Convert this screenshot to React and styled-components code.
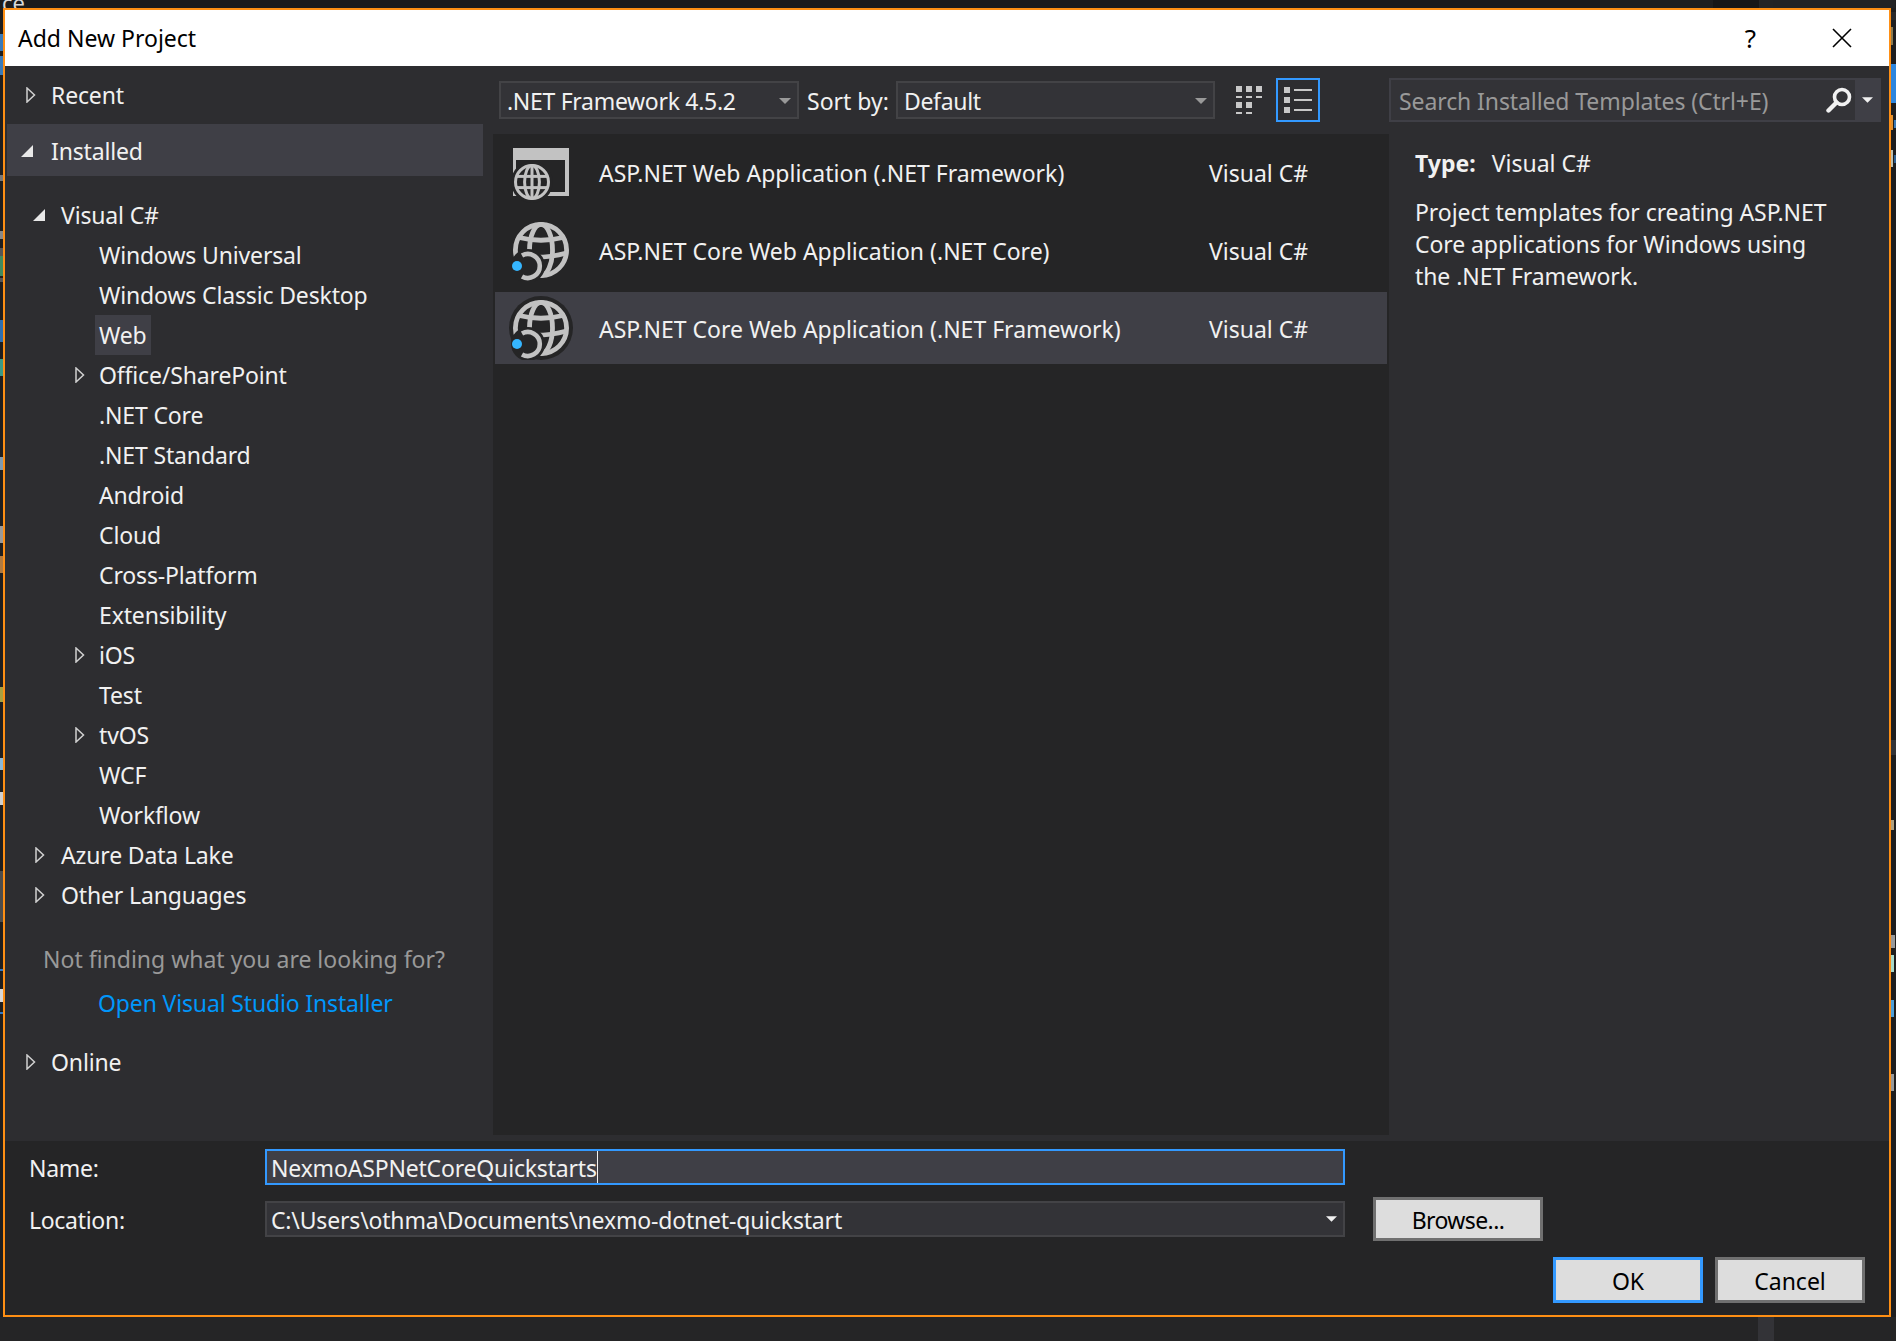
import React from 'react';
import styled, { createGlobalStyle } from 'styled-components';

const GlobalStyle = createGlobalStyle`
  html, body {
    margin: 0;
    padding: 0;
    background: #1e1e1f;
  }
  * {
    box-sizing: border-box;
  }
`;

const Stage = styled.div`
  position: relative;
  width: 1896px;
  height: 1341px;
  overflow: hidden;
  padding: 8px 0 0 3px;
  background: linear-gradient(#1b1b1c 0, #1b1b1c 8px, #1e1e1f 8px, #1e1e1f 1317px, #252526 1317px);
  font-family: 'Noto Sans', 'Open Sans', sans-serif;
  font-size: 23px;
  color: #f1f1f1;
`;

// editor behind the dialog, only slivers of it stick out
const Sliver = styled.div`
  position: absolute;
  left: ${({ $x }) => $x}px;
  top: ${({ $y }) => $y}px;
  width: ${({ $w }) => $w}px;
  height: ${({ $h }) => $h}px;
  background: ${({ $c }) => $c};
`;

const CodeScrap = styled.span`
  position: absolute;
  left: 2px;
  top: -13px;
  font-size: 22px;
  color: #d8d8d8;
`;

const Dialog = styled.div`
  position: relative;
  width: 1888px;
  height: 1309px;
  border: 2px solid #fe8f14;
  background: #2d2d30;
  display: flex;
  flex-direction: column;
`;

const TitleBar = styled.div`
  height: 56px;
  flex-shrink: 0;
  background: #fff;
  color: #000;
  display: flex;
  align-items: center;
  padding: 0 37px 0 13px;
`;

const Title = styled.div`
  flex: 1;
`;

const HelpMark = styled.span`
  font-size: 26px;
  margin-right: 76px;
`;

const Body = styled.div`
  flex: 1;
  display: flex;
  min-height: 0;
`;

const Sidebar = styled.div`
  width: 488px;
  flex-shrink: 0;
  padding: 2px 10px 0 2px;
  letter-spacing: -0.15px;
`;

const TopRow = styled.div`
  height: 52px;
  display: flex;
  align-items: center;
  padding: 2px 0 0 ${({ $open }) => ($open ? 13 : 19)}px;
  margin-bottom: 4px;
  background: ${({ $active }) => ($active ? '#3f3f46' : 'transparent')};
`;

const TreeList = styled.div`
  margin-top: 19px;
`;

const TreeRow = styled.div`
  height: 40px;
  display: flex;
  align-items: center;
  padding-left: ${({ $indent }) => $indent}px;
`;

const ArrowSlot = styled.span`
  width: ${({ $w }) => $w}px;
  flex-shrink: 0;
  display: flex;
  align-items: center;
`;

const RowLabel = styled.span`
  height: 40px;
  line-height: 40px;
  padding: 0 4px;
  margin-left: -4px;
  background: ${({ $selected }) => ($selected ? '#3f3f46' : 'transparent')};
`;

const Hint = styled.div`
  height: 40px;
  line-height: 40px;
  padding-left: 36px;
  margin-top: 24px;
  color: #999;
  letter-spacing: 0;
`;

const InstallerLink = styled.div`
  height: 40px;
  line-height: 40px;
  padding-left: 91px;
  margin-top: 4px;
  color: #0097fb;
`;

const OnlineRow = styled(TopRow)`
  margin-top: 12px;
`;

const Center = styled.div`
  width: 896px;
  flex-shrink: 0;
  padding: 12px 0 6px;
  display: flex;
  flex-direction: column;
`;

const Toolbar = styled.div`
  height: 44px;
  display: flex;
  align-items: center;
  padding-left: 6px;
`;

const Combo = styled.div`
  width: ${({ $w }) => $w}px;
  height: 38px;
  border: 2px solid #434346;
  background: #333337;
  display: flex;
  align-items: center;
  justify-content: space-between;
  padding: 2px 6px 0 6px;
  letter-spacing: -0.3px;
`;

const SortLabel = styled.span`
  margin: 2px 7px 0 8px;
  white-space: nowrap;
`;

const ViewGrid = styled.svg`
  width: 26px;
  height: 28px;
  margin-left: 21px;
  flex-shrink: 0;
`;

const ViewList = styled.span`
  width: 44px;
  height: 44px;
  margin-left: 14px;
  border: 2px solid #3399ff;
  display: flex;
  align-items: center;
  justify-content: center;
  flex-shrink: 0;
`;

const TemplateList = styled.div`
  margin-top: 12px;
  flex: 1;
  background: #252526;
  padding: 2px 2px 0 2px;
  display: flex;
  flex-direction: column;
  gap: 6px;
`;

const TemplateRow = styled.div`
  height: 72px;
  display: flex;
  align-items: center;
  padding-left: 14px;
  background: ${({ $selected }) => ($selected ? '#3f3f46' : 'transparent')};
`;

const TemplateName = styled.span`
  width: 610px;
  margin-left: 26px;
  padding-top: 2px;
  flex-shrink: 0;
`;

const TemplateLang = styled.span`
  padding-top: 2px;
`;

const Details = styled.div`
  flex: 1;
  padding: 12px 8px 0 0;
`;

const SearchBox = styled.div`
  height: 44px;
  border: 2px solid #3f3f46;
  background: #333337;
  display: flex;
  align-items: center;
`;

const SearchText = styled.span`
  flex: 1;
  color: #999;
  padding: 2px 0 0 8px;
  letter-spacing: -0.1px;
`;

const SearchIconBox = styled.span`
  width: 34px;
  padding-left: 5px;
  display: flex;
  justify-content: flex-start;
`;

const SearchDrop = styled.span`
  width: 24px;
  height: 40px;
  background: #3f3f46;
  display: flex;
  align-items: center;
  justify-content: center;
`;

const DetailText = styled.div`
  padding-left: 26px;
  line-height: 32px;
`;

const TypeLine = styled(DetailText)`
  margin-top: 25px;
  display: flex;
`;

const TypeKey = styled.b`
  font-weight: 700;
  margin-right: 16px;
`;

const Description = styled(DetailText)`
  margin-top: 17px;
  letter-spacing: -0.08px;
`;

const Footer = styled.div`
  height: 174px;
  flex-shrink: 0;
  background: #252526;
  padding: 8px 24px 0 24px;
`;

const FormRow = styled.div`
  display: flex;
  align-items: center;
  margin-bottom: 12px;
`;

const FormLabel = styled.label`
  width: 236px;
  flex-shrink: 0;
  padding-top: 2px;
  letter-spacing: -0.3px;
`;

const Field = styled.div`
  width: 1080px;
  height: 36px;
  flex-shrink: 0;
  display: flex;
  align-items: center;
  justify-content: space-between;
  padding: 0 6px 0 4px;
  border: 2px solid ${({ $focused }) => ($focused ? '#3399ff' : '#434346')};
  background: ${({ $focused }) => ($focused ? '#3f3f46' : '#333337')};
`;

const FieldText = styled.span`
  line-height: 34px;
  height: 32px;
  letter-spacing: -0.18px;
`;

const Caret = styled.span`
  display: inline-block;
  width: 1px;
  height: 32px;
  background: #f1f1f1;
  vertical-align: top;
`;

const Button = styled.div`
  width: ${({ $w }) => $w}px;
  height: ${({ $h }) => $h}px;
  border: 3px solid ${({ $primary }) => ($primary ? '#3399ff' : '#707070')};
  background: #dddddd;
  color: #000;
  padding-top: 2px;
  display: flex;
  align-items: center;
  justify-content: center;
  flex-shrink: 0;
`;

const BrowseButton = styled(Button)`
  margin-left: 28px;
  letter-spacing: -0.6px;
`;

const Actions = styled.div`
  display: flex;
  justify-content: flex-end;
  gap: 12px;
  margin-top: 16px;
`;

const slivers = [
  [0, 34, 3, 17, '#3a7ab8'], [0, 56, 3, 19, '#3a7ab8'], [0, 175, 3, 6, '#777'], [0, 231, 3, 8, '#888'],
  [0, 248, 3, 8, '#555'], [0, 256, 3, 20, '#3f8a5f'], [0, 278, 3, 4, '#555'], [0, 320, 3, 22, '#2f6fb0'],
  [0, 359, 3, 17, '#3a9a86'], [0, 457, 3, 13, '#7f9ab0'], [0, 526, 3, 17, '#999'], [0, 556, 3, 17, '#b07a40'],
  [0, 687, 3, 15, '#a8a040'], [0, 758, 3, 12, '#8ab8d8'], [0, 792, 3, 13, '#d0d0d0'], [0, 871, 3, 51, '#4c4c4c'],
  [0, 969, 3, 2, '#2f78c8'], [0, 989, 3, 13, '#d8d8d8'], [0, 1012, 3, 2, '#2f78c8'],
  [1891, 12, 5, 8, '#2a2a2b'], [1891, 27, 2, 18, '#8a7a50'], [1891, 64, 5, 39, '#2e86de'], [1891, 115, 2, 15, '#e09030'],
  [1894, 120, 2, 8, '#3a7ab8'], [1891, 150, 2, 17, '#c0c0b0'], [1894, 155, 2, 8, '#2f5f90'],
  [1891, 740, 5, 15, '#333337'], [1891, 820, 3, 10, '#b0a080'], [1891, 935, 4, 13, '#999'], [1891, 955, 3, 17, '#a8d8c8'],
  [1891, 1000, 3, 17, '#4f9fd8'], [1891, 1074, 3, 17, '#999'],
  [1600, 0, 296, 8, '#1e1e1f'], [1713, 0, 46, 8, '#161617'], [1759, 0, 14, 8, '#242425'], [1773, 0, 122, 8, '#232324'],
  [1758, 1317, 16, 24, '#333337'],
];

const sideItems = [
  { label: 'Windows Universal' },
  { label: 'Windows Classic Desktop' },
  { label: 'Web', selected: true },
  { label: 'Office/SharePoint', arrow: true },
  { label: '.NET Core' },
  { label: '.NET Standard' },
  { label: 'Android' },
  { label: 'Cloud' },
  { label: 'Cross-Platform' },
  { label: 'Extensibility' },
  { label: 'iOS', arrow: true },
  { label: 'Test' },
  { label: 'tvOS', arrow: true },
  { label: 'WCF' },
  { label: 'Workflow' },
];

const Arrow = ({ open }) =>
  open ? (
    <svg width="14" height="14" viewBox="0 0 14 14">
      <polygon points="13,1 13,13 1,13" fill="#e8e8e8" />
    </svg>
  ) : (
    <svg width="10" height="16" viewBox="0 0 10 16">
      <polygon points="1,1 8.5,8 1,15" fill="none" stroke="#d0d0d0" strokeWidth="1.5" />
    </svg>
  );

const Caret3 = ({ color = '#f1f1f1', w = 12, h = 6 }) => (
  <svg width={w} height={h} viewBox="0 0 12 6">
    <polygon points="0,0 12,0 6,6" fill={color} />
  </svg>
);

const SmallGlobe = ({ cx, cy, r }) => (
  <g fill="none" stroke="#c2c2c2" strokeWidth="3">
    <circle cx={cx} cy={cy} r={r} />
    <ellipse cx={cx} cy={cy} rx={r * 0.45} ry={r} />
    <line x1={cx} y1={cy - r} x2={cx} y2={cy + r} />
    <line x1={cx - r * 0.92} y1={cy - r * 0.34} x2={cx + r * 0.92} y2={cy - r * 0.34} />
    <line x1={cx - r * 0.92} y1={cy + r * 0.34} x2={cx + r * 0.92} y2={cy + r * 0.34} />
  </g>
);

const LargeGlobe = () => (
  <g fill="none" stroke="#c2c2c2" strokeWidth="4.8">
    <circle cx="28" cy="28" r="25.6" />
    <ellipse cx="28" cy="28" rx="11.5" ry="25.6" />
    <path d="M6 15.5Q28 21 50 15.5" />
    <path d="M2.4 33.5Q28 38 53.6 31" />
  </g>
);

const WindowIcon = () => (
  <svg width="64" height="64" viewBox="-4 -4 64 64">
    <rect x="0" y="4" width="56" height="48" fill="#c2c2c2" />
    <rect x="3" y="16" width="49" height="32" fill="#252526" />
    <circle cx="19" cy="38" r="21" fill="#252526" />
    <SmallGlobe cx={19} cy={38} r={16.5} />
  </svg>
);

const CoreIcon = ({ selected }) => (
  <svg width="64" height="64" viewBox="-4 -4 64 64">
    {selected && <circle cx="28" cy="28" r="32" fill="#252526" />}
    <LargeGlobe />
    <circle cx="15" cy="44" r="17" fill="#252526" />
    <path d="M9 33.5A12 12 0 1 1 9 54.5" fill="none" stroke="#c2c2c2" strokeWidth="4.6" />
    <circle cx="4" cy="44" r="5" fill="#35b6ff" />
  </svg>
);

const GridIcon = () => (
  <ViewGrid viewBox="0 0 26 28">
    <g fill="#c8c8c8">
      {[0, 10, 20].map((x) => (
        <React.Fragment key={x}>
          <rect x={x} y="0" width="6" height="6" />
          <rect x={x} y="10" width="6" height="2" />
        </React.Fragment>
      ))}
      {[0, 10].map((x) => (
        <React.Fragment key={x}>
          <rect x={x} y="16" width="6" height="6" />
          <rect x={x} y="26" width="6" height="2" />
        </React.Fragment>
      ))}
    </g>
  </ViewGrid>
);

const ListIcon = () => (
  <svg width="28" height="26" viewBox="0 0 28 26">
    <g fill="#c8c8c8">
      {[0, 10, 20].map((y) => (
        <React.Fragment key={y}>
          <rect x="0" y={y} width="6" height="6" />
          <rect x="10" y={y + 2} width="18" height="2" />
        </React.Fragment>
      ))}
    </g>
  </svg>
);

const SearchIcon = () => (
  <svg width="26" height="26" viewBox="0 0 26 26">
    <circle cx="16" cy="10" r="7.5" fill="none" stroke="#f1f1f1" strokeWidth="3.6" />
    <line x1="10.5" y1="15.5" x2="2.5" y2="23.5" stroke="#f1f1f1" strokeWidth="4.4" strokeLinecap="round" />
  </svg>
);

const CloseIcon = () => (
  <svg width="20" height="20" viewBox="0 0 20 20">
    <path d="M1 1L19 19M19 1L1 19" stroke="#000" strokeWidth="1.6" fill="none" />
  </svg>
);

const templates = [
  { name: 'ASP.NET Web Application (.NET Framework)', icon: <WindowIcon /> },
  { name: 'ASP.NET Core Web Application (.NET Core)', icon: <CoreIcon /> },
  { name: 'ASP.NET Core Web Application (.NET Framework)', icon: <CoreIcon selected />, selected: true },
];

export default function App() {
  return (
    <Stage>
      <GlobalStyle />
      <CodeScrap>ce,</CodeScrap>
      {slivers.map(([x, y, w, h, c]) => (
        <Sliver key={`${x}-${y}`} $x={x} $y={y} $w={w} $h={h} $c={c} />
      ))}
      <Dialog>
        <TitleBar>
          <Title>Add New Project</Title>
          <HelpMark>?</HelpMark>
          <CloseIcon />
        </TitleBar>
        <Body>
          <Sidebar>
            <TopRow>
              <ArrowSlot $w={25}>
                <Arrow />
              </ArrowSlot>
              Recent
            </TopRow>
            <TopRow $active $open>
              <ArrowSlot $w={31}>
                <Arrow open />
              </ArrowSlot>
              Installed
            </TopRow>
            <TreeList>
              <TreeRow $indent={25}>
                <ArrowSlot $w={29}>
                  <Arrow open />
                </ArrowSlot>
                <RowLabel>Visual C#</RowLabel>
              </TreeRow>
              {sideItems.map(({ label, selected, arrow }) => (
                <TreeRow key={label} $indent={68}>
                  <ArrowSlot $w={24}>{arrow && <Arrow />}</ArrowSlot>
                  <RowLabel $selected={selected}>{label}</RowLabel>
                </TreeRow>
              ))}
              <TreeRow $indent={28}>
                <ArrowSlot $w={26}>
                  <Arrow />
                </ArrowSlot>
                <RowLabel>Azure Data Lake</RowLabel>
              </TreeRow>
              <TreeRow $indent={28}>
                <ArrowSlot $w={26}>
                  <Arrow />
                </ArrowSlot>
                <RowLabel>Other Languages</RowLabel>
              </TreeRow>
            </TreeList>
            <Hint>Not finding what you are looking for?</Hint>
            <InstallerLink>Open Visual Studio Installer</InstallerLink>
            <OnlineRow>
              <ArrowSlot $w={25}>
                <Arrow />
              </ArrowSlot>
              Online
            </OnlineRow>
          </Sidebar>

          <Center>
            <Toolbar>
              <Combo $w={300}>
                .NET Framework 4.5.2
                <Caret3 color="#999" />
              </Combo>
              <SortLabel>Sort by:</SortLabel>
              <Combo $w={319}>
                Default
                <Caret3 color="#999" />
              </Combo>
              <GridIcon />
              <ViewList>
                <ListIcon />
              </ViewList>
            </Toolbar>
            <TemplateList>
              {templates.map(({ name, icon, selected }) => (
                <TemplateRow key={name} $selected={selected}>
                  {icon}
                  <TemplateName>{name}</TemplateName>
                  <TemplateLang>Visual C#</TemplateLang>
                </TemplateRow>
              ))}
            </TemplateList>
          </Center>

          <Details>
            <SearchBox>
              <SearchText>Search Installed Templates (Ctrl+E)</SearchText>
              <SearchIconBox>
                <SearchIcon />
              </SearchIconBox>
              <SearchDrop>
                <Caret3 w={11} h={6} />
              </SearchDrop>
            </SearchBox>
            <TypeLine>
              <TypeKey>Type:</TypeKey>
              Visual C#
            </TypeLine>
            <Description>
              Project templates for creating ASP.NET
              <br />
              Core applications for Windows using
              <br />
              the .NET Framework.
            </Description>
          </Details>
        </Body>

        <Footer>
          <FormRow>
            <FormLabel>Name:</FormLabel>
            <Field $focused>
              <FieldText>
                NexmoASPNetCoreQuickstarts
                <Caret />
              </FieldText>
            </Field>
          </FormRow>
          <FormRow>
            <FormLabel>Location:</FormLabel>
            <Field>
              <FieldText>C:\Users\othma\Documents\nexmo-dotnet-quickstart</FieldText>
              <Caret3 w={11} h={6} />
            </Field>
            <BrowseButton $w={170} $h={44}>
              Browse...
            </BrowseButton>
          </FormRow>
          <Actions>
            <Button $w={150} $h={46} $primary>
              OK
            </Button>
            <Button $w={150} $h={46}>
              Cancel
            </Button>
          </Actions>
        </Footer>
      </Dialog>
    </Stage>
  );
}
